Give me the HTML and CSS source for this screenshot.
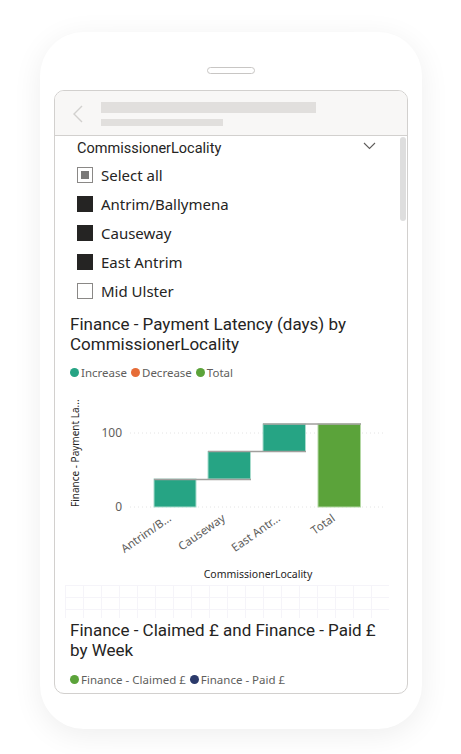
FILE: index.html
```html
<!DOCTYPE html>
<html>
<head>
<meta charset="utf-8">
<link rel="stylesheet" href="styles.css">
</head>
<body>
<div class="phone">
  <div class="notch"></div>
  <div class="screen">
    <div class="topbar">
      <svg class="back" width="12" height="18" viewBox="0 0 12 18"><path d="M10 1 L2 9 L10 17" fill="none" stroke="#d2d0ce" stroke-width="1.4"/></svg>
      <div class="ph">
        <div class="ph1"></div>
        <div class="ph2"></div>
      </div>
    </div>
    <div class="content">
      <div class="scrollbar"></div>
      <div class="slicer">
        <div class="slicer-head">
          <span>CommissionerLocality</span>
          <svg class="chev" width="13" height="8" viewBox="0 0 13 8"><path d="M1 1 L6.5 6.5 L12 1" fill="none" stroke="#605e5c" stroke-width="1.1"/></svg>
        </div>
        <div class="row"><span class="cb partial"></span><span>Select all</span></div>
        <div class="row"><span class="cb on"></span><span>Antrim/Ballymena</span></div>
        <div class="row"><span class="cb on"></span><span>Causeway</span></div>
        <div class="row"><span class="cb on"></span><span>East Antrim</span></div>
        <div class="row"><span class="cb"></span><span>Mid Ulster</span></div>
      </div>
      <div class="visual">
        <div class="title">Finance - Payment Latency (days) by CommissionerLocality</div>
        <div class="legend">
          <span class="dot teal"></span><span>Increase</span>
          <span class="dot orange"></span><span>Decrease</span>
          <span class="dot green"></span><span>Total</span>
        </div>
        <svg class="chart" width="340" height="200" viewBox="55 383 340 200">
          <text class="ytitle" transform="translate(79 507) rotate(-90)">Finance - Payment La...</text>
          <text class="ylab" x="122" y="437">100</text>
          <text class="ylab" x="122" y="511">0</text>
          <line x1="130" y1="433" x2="384" y2="433" class="grid"/>
          <line x1="130" y1="507" x2="384" y2="507" class="grid"/>
          <rect x="154" y="479" width="42" height="28" class="inc"/>
          <rect x="208" y="451.5" width="42.5" height="27.5" class="inc"/>
          <rect x="263" y="424" width="42.5" height="27.5" class="inc"/>
          <rect x="318" y="424" width="42.5" height="83" class="tot"/>
          <line x1="154" y1="479.5" x2="251" y2="479.5" class="conn"/>
          <line x1="208" y1="451.5" x2="306" y2="451.5" class="conn"/>
          <line x1="263" y1="424" x2="361" y2="424" class="conn"/>
          <text class="xlab" transform="translate(172 520) rotate(-35)">Antrim/B...</text>
          <text class="xlab" transform="translate(226 520) rotate(-35)">Causeway</text>
          <text class="xlab" transform="translate(281 520) rotate(-35)">East Antr...</text>
          <text class="xlab" transform="translate(336 520) rotate(-35)">Total</text>
          <text class="xtitle" x="258" y="578">CommissionerLocality</text>
        </svg>
      </div>
      <div class="ghost"></div>
      <div class="visual second">
        <div class="title">Finance - Claimed £ and Finance - Paid £ by Week</div>
        <div class="legend">
          <span class="dot green"></span><span>Finance - Claimed £</span>
          <span class="dot navy"></span><span>Finance - Paid £</span>
        </div>
      </div>
    </div>
  </div>
</div>
</body>
</html>
```

FILE: styles.css
```css
html, body {
  margin: 0;
  padding: 0;
  background: #ffffff;
}
body {
  width: 461px;
  height: 754px;
  overflow: hidden;
  font-family: "Noto Sans", sans-serif;
}
.phone {
  margin: 32px 0 0 40px;
  width: 382px;
  height: 697px;
  box-sizing: border-box;
  border-radius: 44px;
  background: #ffffff;
  box-shadow: 0 6px 30px rgba(0, 0, 0, 0.07);
  padding: 35px 14px 0 14px;
  display: flex;
  flex-direction: column;
}
.notch {
  align-self: center;
  width: 48px;
  height: 7px;
  box-sizing: border-box;
  border: 1px solid #c8c6c4;
  border-radius: 4px;
  margin-bottom: 16px;
}
.screen {
  width: 354px;
  height: 604px;
  box-sizing: border-box;
  border: 1px solid #d2d0ce;
  border-radius: 10px;
  overflow: hidden;
  background: #ffffff;
  display: flex;
  flex-direction: column;
}
.topbar {
  height: 45px;
  flex: none;
  box-sizing: border-box;
  background: #f8f7f6;
  border-bottom: 1px solid #d2d0ce;
  display: flex;
  align-items: flex-start;
  padding: 11px 0 0 17px;
}
.back {
  margin-top: 3px;
  margin-right: 17px;
}
.ph {
  display: flex;
  flex-direction: column;
  gap: 6px;
}
.ph1 {
  width: 215px;
  height: 11px;
  background: #e1dfdd;
}
.ph2 {
  width: 122px;
  height: 7px;
  background: #e1dfdd;
}
.content {
  position: relative;
  flex: 1;
}
.scrollbar {
  position: absolute;
  left: 345px;
  top: 1px;
  width: 6px;
  height: 84px;
  border-radius: 3px;
  background: #dedede;
}
.slicer {
  padding: 0 0 0 22px;
}
.slicer-head {
  height: 24px;
  display: flex;
  align-items: center;
  font-family: "Roboto", sans-serif;
  font-size: 14.5px;
  color: #252423;
  width: 299px;
  justify-content: space-between;
}
.chev {
  margin-top: -4px;
}
.row {
  height: 29px;
  display: flex;
  align-items: center;
  font-size: 15px;
  color: #252423;
}
.cb {
  width: 16px;
  height: 16px;
  box-sizing: border-box;
  border: 1px solid #8a8886;
  background: #fff;
  margin-right: 8px;
  display: flex;
  align-items: center;
  justify-content: center;
}
.cb.on {
  background: #252423;
  border-color: #252423;
}
.cb.partial::after {
  content: "";
  width: 8px;
  height: 8px;
  background: #7a7978;
}
.visual {
  padding: 9px 0 0 15px;
}
.title {
  font-family: "Roboto", sans-serif;
  font-size: 17px;
  font-weight: 400;
  line-height: 20px;
  color: #252423;
  width: 315px;
}
.legend {
  margin-top: 11px;
  height: 14px;
  display: flex;
  align-items: center;
  font-size: 11.5px;
  color: #605e5c;
}
.dot {
  width: 9px;
  height: 9px;
  border-radius: 50%;
  margin-right: 2px;
}
.legend span + .dot {
  margin-left: 4px;
}
.teal { background: #26a484; }
.orange { background: #e66c37; }
.green { background: #5ba33a; }
.navy { background: #2b3a6b; }
.chart {
  display: block;
  margin: 4px 0 0 -15px;
}
.chart text {
  font-family: "Noto Sans", sans-serif;
}
.ytitle {
  font-size: 10px;
  fill: #252423;
}
.ylab {
  font-size: 12px;
  fill: #605e5c;
  text-anchor: end;
}
.grid {
  stroke: #e4e4e4;
  stroke-width: 1;
  stroke-dasharray: 1 3;
}
.inc {
  fill: #26a484;
  stroke: #a8dccd;
  stroke-width: 1;
}
.tot {
  fill: #5ba33a;
  stroke: #b4d8a4;
  stroke-width: 1;
}
.conn {
  stroke: #a19f9d;
  stroke-width: 1.5;
}
.xlab {
  font-size: 11.5px;
  fill: #605e5c;
  text-anchor: end;
}
.xtitle {
  font-size: 10.5px;
  fill: #252423;
  text-anchor: middle;
}
.ghost {
  margin: 2px 0 0 10px;
  width: 324px;
  height: 33px;
  background-image:
    linear-gradient(to right, #f5f4f9 1px, transparent 1px),
    linear-gradient(to bottom, #f5f4f9 1px, transparent 1px);
  background-size: 18px 100%, 100% 12px;
}
.second {
  padding-top: 2px;
}
.second .legend {
  margin-top: 12px;
}
```
